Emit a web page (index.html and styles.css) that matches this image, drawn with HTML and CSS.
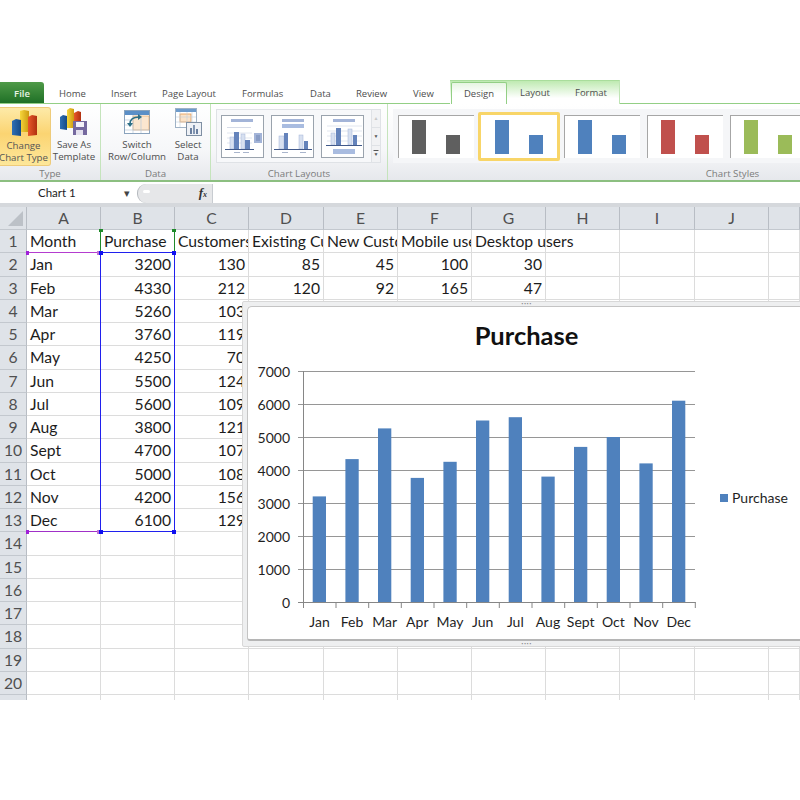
FILE: index.html
```html
<!DOCTYPE html>
<html>
<head>
<meta charset="utf-8">
<title>Purchase chart</title>
<link rel="stylesheet" href="styles.css">
</head>
<body>

<div class="tabs">
  <div class="tab file">File</div>
  <div class="tab t-home">Home</div>
  <div class="tab t-insert">Insert</div>
  <div class="tab t-page">Page Layout</div>
  <div class="tab t-formulas">Formulas</div>
  <div class="tab t-data">Data</div>
  <div class="tab t-review">Review</div>
  <div class="tab t-view">View</div>
  <div class="chart-tools">
    <div class="tab design">Design</div>
    <div class="tab t-layout">Layout</div>
    <div class="tab t-format">Format</div>
  </div>
</div>

<div class="ribbon">
  <div class="group g-type">
    <div class="group-body">
      <div class="big-btn active b-change">
        <svg width="32" height="30" viewBox="8 107 32 30">
          <defs>
            <linearGradient id="blue" x1="0" x2="1" y1="0" y2="0"><stop offset="0" stop-color="#2f6fb5"/><stop offset="1" stop-color="#164a86"/></linearGradient>
            <linearGradient id="yellow" x1="0" x2="1" y1="0" y2="0"><stop offset="0" stop-color="#f6d63c"/><stop offset="1" stop-color="#cc9a10"/></linearGradient>
            <linearGradient id="red" x1="0" x2="1" y1="0" y2="0"><stop offset="0" stop-color="#e8582a"/><stop offset="1" stop-color="#b0300f"/></linearGradient>
          </defs>
          <polygon points="20,110 24,109 29,110 29,131 20,131" fill="url(#yellow)"/>
          <polygon points="12,120 16,118 21,119 21,135 12,134" fill="url(#blue)"/>
          <polygon points="28,116 32,114 37,115 37,134 28,135" fill="url(#red)"/>
        </svg>
        <span>Change<br>Chart Type</span>
      </div>
      <div class="big-btn b-save">
        <svg width="32" height="30" viewBox="58 107 32 30">
          <polygon points="67,110 70,108 74,109 74,128 67,128" fill="url(#yellow)"/>
          <polygon points="60,117 63,115 67,116 67,130 60,129" fill="url(#blue)"/>
          <polygon points="74,113 78,111 81,112 81,122 74,126" fill="url(#red)"/>
          <rect x="73" y="121" width="14" height="14" fill="#75699f"/>
          <rect x="76" y="122" width="8" height="5" fill="#f4f2f8"/>
          <rect x="76" y="130" width="7" height="5" fill="#e4e1ee"/>
        </svg>
        <span>Save As<br>Template</span>
      </div>
    </div>
    <div class="group-label">Type</div>
  </div>

  <div class="group g-data">
    <div class="group-body">
      <div class="big-btn b-switch">
        <svg width="30" height="30" viewBox="122 107 30 30">
          <rect x="124.500" y="110.500" width="25" height="23" fill="#fff" stroke="#8aa3bd"/>
          <rect x="125" y="111" width="24" height="4" fill="#5b8fc7"/>
          <rect x="133" y="116" width="16" height="14" fill="#fbe6cf" stroke="#e7a868" stroke-width="0.700"/>
          <path d="M125 120H133M125 125H133M125 130H149M133 115V133M141 115V133" stroke="#b9c8d8" stroke-width="0.700" fill="none"/>
          <path d="M130 124C130 119 134 117 139 117" stroke="#2d6f86" stroke-width="1.500" fill="none"/>
          <path d="M138 114L142 117L138 120Z" fill="#2d6f86"/>
          <path d="M127 123L130 127L133 123Z" fill="#2d6f86"/>
        </svg>
        <span>Switch<br>Row/Column</span>
      </div>
      <div class="big-btn b-select">
        <svg width="30" height="30" viewBox="173 107 30 30">
          <rect x="175.500" y="108.500" width="21" height="19" fill="#fff" stroke="#9fb2c6"/>
          <rect x="176" y="109" width="20" height="3" fill="#6d9bcc"/>
          <rect x="180" y="114" width="11" height="8" fill="#fbe3c8" stroke="#e59a4f" stroke-width="0.800"/>
          <path d="M176 117H196M176 122H196M180 112V127M187 112V127M192 112V127" stroke="#c5d1dd" stroke-width="0.600" fill="none"/>
          <rect x="186.500" y="122.500" width="15" height="13" fill="#eef1f6" stroke="#7f8fa3"/>
          <rect x="190" y="128" width="2" height="6" fill="#6a7f9f"/>
          <rect x="193" y="125" width="2" height="9" fill="#8497b3"/>
          <rect x="196" y="129" width="2" height="5" fill="#6a7f9f"/>
        </svg>
        <span>Select<br>Data</span>
      </div>
    </div>
    <div class="group-label">Data</div>
  </div>

  <div class="group g-layouts">
    <div class="group-body">
      <div class="layout-gallery">
        <div class="layout-thumb">
          <svg width="41" height="41" viewBox="0 0 41 41">
            <rect x="9" y="3" width="22" height="3" fill="#a3b4d8"/>
            <rect x="5" y="11" width="24" height="1" fill="#d5dbe8"/>
            <path d="M5 17H30M5 22H30M5 27H30" stroke="#d9dfeb" stroke-width="0.800"/>
            <rect x="8" y="21" width="4" height="12" fill="#d7e0f0" stroke="#a3b4d8" stroke-width="0.500"/>
            <rect x="12" y="16" width="5" height="17" fill="#6483bb"/>
            <rect x="19" y="18" width="4" height="15" fill="#d7e0f0" stroke="#a3b4d8" stroke-width="0.500"/>
            <rect x="23" y="24" width="5" height="9" fill="#6483bb"/>
            <rect x="3" y="33" width="29" height="1" fill="#41598a"/>
            <rect x="32" y="17" width="8" height="10" fill="#a3b4d8"/>
            <path d="M34 20H38M34 22H38M34 24H38" stroke="#5f78aa" stroke-width="0.800"/>
            <rect x="12" y="36" width="6" height="1" fill="#a9b5cc"/>
            <rect x="21" y="36" width="6" height="1" fill="#a9b5cc"/>
          </svg>
        </div>
        <div class="layout-thumb">
          <svg width="41" height="41" viewBox="0 0 41 41">
            <rect x="10" y="3" width="22" height="3" fill="#a3b4d8"/>
            <rect x="10" y="8" width="22" height="4" fill="#a9bce0"/>
            <rect x="7" y="20" width="5" height="13" fill="#d7e0f0" stroke="#a3b4d8" stroke-width="0.500"/>
            <rect x="12" y="17" width="4" height="16" fill="#6483bb"/>
            <rect x="27" y="19" width="4" height="14" fill="#d7e0f0" stroke="#a3b4d8" stroke-width="0.500"/>
            <rect x="32" y="25" width="4" height="8" fill="#6483bb"/>
            <rect x="2" y="33" width="38" height="1" fill="#41598a"/>
            <rect x="10" y="36" width="6" height="1" fill="#a9b5cc"/>
            <rect x="28" y="36" width="6" height="1" fill="#a9b5cc"/>
          </svg>
        </div>
        <div class="layout-thumb">
          <svg width="41" height="41" viewBox="0 0 41 41">
            <rect x="11" y="3" width="22" height="3" fill="#a3b4d8"/>
            <path d="M5 10H40M5 15H40M5 20H40M5 25H40" stroke="#d9dfeb" stroke-width="0.800"/>
            <rect x="9" y="17" width="4" height="12" fill="#d7e0f0" stroke="#a3b4d8" stroke-width="0.500"/>
            <rect x="14" y="12" width="5" height="17" fill="#6483bb"/>
            <rect x="26" y="13" width="4" height="16" fill="#d7e0f0" stroke="#a3b4d8" stroke-width="0.500"/>
            <rect x="31" y="19" width="4" height="10" fill="#6483bb"/>
            <rect x="4" y="29" width="36" height="1" fill="#41598a"/>
            <rect x="11" y="33" width="22" height="5" fill="#a9bce0"/>
          </svg>
        </div>
        <div class="gallery-scroll">
          <div class="scroll-btn off">▲</div>
          <div class="scroll-btn">▼</div>
          <div class="scroll-btn more">▼</div>
        </div>
      </div>
    </div>
    <div class="group-label">Chart Layouts</div>
  </div>

  <div class="group g-styles">
    <div class="group-body">
      <div class="style-gallery">
        <div class="style-thumb"><i class="bar tall dark"></i><i class="bar short dark"></i></div>
        <div class="style-thumb selected"><i class="bar tall blue"></i><i class="bar short blue"></i></div>
        <div class="style-thumb"><i class="bar tall blue"></i><i class="bar short blue"></i></div>
        <div class="style-thumb"><i class="bar tall red"></i><i class="bar short red"></i></div>
        <div class="style-thumb"><i class="bar tall green"></i><i class="bar short green"></i></div>
      </div>
    </div>
    <div class="group-label">Chart Styles</div>
  </div>
</div>

<div class="formula-bar">
  <div class="name-box">Chart 1<span class="arrow">▾</span></div>
  <div class="fx-part"><span class="knob"></span><span class="fx">f<sub>x</sub></span></div>
  <div class="formula-input"></div>
</div>

<div class="sheet">
  <table class="cells">
    <colgroup>
      <col class="c-head"><col class="c74"><col class="c74"><col class="c74"><col class="c75"><col class="c74"><col class="c74"><col class="c74"><col class="c74"><col class="c75"><col class="c74"><col class="c-rest">
    </colgroup>
    <tr class="head-row"><th class="corner"><i></i></th><th>A</th><th>B</th><th>C</th><th>D</th><th>E</th><th>F</th><th>G</th><th>H</th><th>I</th><th>J</th><th></th></tr>
    <tr><th>1</th><td>Month</td><td>Purchase</td><td>Customers</td><td>Existing Customers</td><td>New Customers</td><td>Mobile users</td><td class="spill">Desktop users</td><td></td><td></td><td></td><td></td></tr>
    <tr><th>2</th><td>Jan</td><td class="n">3200</td><td class="n">130</td><td class="n">85</td><td class="n">45</td><td class="n">100</td><td class="n">30</td><td></td><td></td><td></td><td></td></tr>
    <tr><th>3</th><td>Feb</td><td class="n">4330</td><td class="n">212</td><td class="n">120</td><td class="n">92</td><td class="n">165</td><td class="n">47</td><td></td><td></td><td></td><td></td></tr>
    <tr><th>4</th><td>Mar</td><td class="n">5260</td><td class="n">103</td><td class="n">67</td><td class="n">36</td><td class="n">80</td><td class="n">23</td><td></td><td></td><td></td><td></td></tr>
    <tr><th>5</th><td>Apr</td><td class="n">3760</td><td class="n">119</td><td></td><td></td><td></td><td></td><td></td><td></td><td></td><td></td></tr>
    <tr><th>6</th><td>May</td><td class="n">4250</td><td class="n">70</td><td></td><td></td><td></td><td></td><td></td><td></td><td></td><td></td></tr>
    <tr><th>7</th><td>Jun</td><td class="n">5500</td><td class="n">124</td><td></td><td></td><td></td><td></td><td></td><td></td><td></td><td></td></tr>
    <tr><th>8</th><td>Jul</td><td class="n">5600</td><td class="n">109</td><td></td><td></td><td></td><td></td><td></td><td></td><td></td><td></td></tr>
    <tr><th>9</th><td>Aug</td><td class="n">3800</td><td class="n">121</td><td></td><td></td><td></td><td></td><td></td><td></td><td></td><td></td></tr>
    <tr><th>10</th><td>Sept</td><td class="n">4700</td><td class="n">107</td><td></td><td></td><td></td><td></td><td></td><td></td><td></td><td></td></tr>
    <tr><th>11</th><td>Oct</td><td class="n">5000</td><td class="n">108</td><td></td><td></td><td></td><td></td><td></td><td></td><td></td><td></td></tr>
    <tr><th>12</th><td>Nov</td><td class="n">4200</td><td class="n">156</td><td></td><td></td><td></td><td></td><td></td><td></td><td></td><td></td></tr>
    <tr><th>13</th><td>Dec</td><td class="n">6100</td><td class="n">129</td><td></td><td></td><td></td><td></td><td></td><td></td><td></td><td></td></tr>
    <tr><th>14</th><td></td><td></td><td></td><td></td><td></td><td></td><td></td><td></td><td></td><td></td><td></td></tr>
    <tr><th>15</th><td></td><td></td><td></td><td></td><td></td><td></td><td></td><td></td><td></td><td></td><td></td></tr>
    <tr><th>16</th><td></td><td></td><td></td><td></td><td></td><td></td><td></td><td></td><td></td><td></td><td></td></tr>
    <tr><th>17</th><td></td><td></td><td></td><td></td><td></td><td></td><td></td><td></td><td></td><td></td><td></td></tr>
    <tr><th>18</th><td></td><td></td><td></td><td></td><td></td><td></td><td></td><td></td><td></td><td></td><td></td></tr>
    <tr><th>19</th><td></td><td></td><td></td><td></td><td></td><td></td><td></td><td></td><td></td><td></td><td></td></tr>
    <tr><th>20</th><td></td><td></td><td></td><td></td><td></td><td></td><td></td><td></td><td></td><td></td><td></td></tr>
    <tr><th></th><td></td><td></td><td></td><td></td><td></td><td></td><td></td><td></td><td></td><td></td><td></td></tr>
  </table>

  <!-- range markers for the selected series -->
  <div class="range r-green"></div>
  <div class="range r-purple"></div>
  <div class="range r-purple2"></div>
  <div class="range r-blue"></div>
  <i class="grip g1"></i><i class="grip g2"></i>
  <i class="grip p1"></i><i class="grip p2"></i><i class="grip p3"></i><i class="grip p4"></i>
  <i class="grip b1"></i><i class="grip b2"></i><i class="grip b3"></i><i class="grip b4"></i>

  <div class="chart">
    <span class="dots top">····</span>
    <span class="dots bottom">····</span>
    <div class="chart-inner">
      <svg class="plot" width="552" height="334" viewBox="248 307 552 334">
        <text class="title" x="526.500" y="345" text-anchor="middle">Purchase</text>

        <g class="grid">
          <path d="M298 371.500H695M298 404.500H695M298 437.500H695M298 470.500H695M298 503.500H695M298 536.500H695M298 569.500H695"/>
        </g>

        <g fill="#4f81bd">
          <rect x="312.700" y="496.400" width="13.300" height="105.600"/>
          <rect x="345.400" y="459.100" width="13.300" height="142.900"/>
          <rect x="378" y="428.400" width="13.300" height="173.600"/>
          <rect x="410.700" y="477.900" width="13.300" height="124.100"/>
          <rect x="443.400" y="461.800" width="13.300" height="140.200"/>
          <rect x="476" y="420.500" width="13.300" height="181.500"/>
          <rect x="508.700" y="417.200" width="13.300" height="184.800"/>
          <rect x="541.400" y="476.600" width="13.300" height="125.400"/>
          <rect x="574" y="446.900" width="13.300" height="155.100"/>
          <rect x="606.700" y="437" width="13.300" height="165"/>
          <rect x="639.400" y="463.400" width="13.300" height="138.600"/>
          <rect x="672" y="400.700" width="13.300" height="201.300"/>
        </g>

        <g class="axis">
          <path d="M303.500 371V602.500M298 602.500H695.500"/>
          <path d="M303.500 602V608M336 602V608M368.700 602V608M401.300 602V608M434 602V608M466.700 602V608M499.300 602V608M532 602V608M564.700 602V608M597.300 602V608M630 602V608M662.700 602V608M695.300 602V608"/>
        </g>

        <g class="labels" text-anchor="end">
          <text x="290" y="377">7000</text>
          <text x="290" y="410">6000</text>
          <text x="290" y="443">5000</text>
          <text x="290" y="476">4000</text>
          <text x="290" y="509">3000</text>
          <text x="290" y="542">2000</text>
          <text x="290" y="575">1000</text>
          <text x="290" y="608">0</text>
        </g>

        <g class="labels" text-anchor="middle">
          <text x="319.500" y="627">Jan</text>
          <text x="352" y="627">Feb</text>
          <text x="384.700" y="627">Mar</text>
          <text x="417.300" y="627">Apr</text>
          <text x="450" y="627">May</text>
          <text x="482.700" y="627">Jun</text>
          <text x="515.300" y="627">Jul</text>
          <text x="548" y="627">Aug</text>
          <text x="580.700" y="627">Sept</text>
          <text x="613.300" y="627">Oct</text>
          <text x="646" y="627">Nov</text>
          <text x="678.700" y="627">Dec</text>
        </g>

        <rect x="720" y="494" width="8" height="8" fill="#4f81bd"/>
        <text class="labels" x="732" y="503">Purchase</text>
      </svg>
    </div>
  </div>
</div>

</body>
</html>
```

FILE: styles.css
```css
html, body {
  margin: 0;
  height: 800px;
  overflow: hidden;
  background: #fff;
}

body {
  padding-top: 82px;
  box-sizing: border-box;
  font-family: "Open Sans", "Liberation Sans", sans-serif;
  font-size: 9.700px;
  color: #444;
}

/* Tabs */
.tabs {
  display: flex;
  height: 21px;
  border-bottom: 1px solid #93cf85;
}

.tab {
  line-height: 24px;
  font-size: 9.500px;
  color: #4d4d4d;
  white-space: nowrap;
}

.file {
  width: 44px;
  height: 21px;
  margin-right: 15px;
  text-align: center;
  font-weight: 600;
  color: #e8f3e5;
  border-radius: 0 3px 0 0;
  background: linear-gradient(#4f9a48, #1f7026);
}

.t-home { width: 52px; }
.t-insert { width: 51px; }
.t-page { width: 80px; }
.t-formulas { width: 68px; }
.t-data { width: 46px; }
.t-review { width: 57px; }
.t-view { width: 37px; }

.chart-tools {
  display: flex;
  flex: none;
  width: 170px;
  height: 24px;
  margin-top: -2px;
  border-right: 1px solid #bfe5b5;
  background: linear-gradient(#bfeab2, #fff 75%);
  box-sizing: border-box;
  border-top: 1px solid #a9dd9c;
}

.design {
  width: 56px;
  height: 23px;
  margin-left: 1px;
  margin-top: 1px;
  line-height: 22px;
  text-align: center;
  box-sizing: border-box;
  border: 1px solid #93cf85;
  border-bottom: 1px solid #fff;
  border-radius: 2px 2px 0 0;
  background: linear-gradient(#e6f5e1, #fff 50%);
}

.t-layout { width: 55px; margin: 1px 0 0 13px; line-height: 22px; }
.t-format { margin-top: 1px; line-height: 22px; }

/* Ribbon */
.ribbon {
  display: flex;
  width: 800px;
  height: 76px;
  overflow: hidden;
  border-bottom: 2px solid #8cbf80;
}

.group {
  display: flex;
  flex: none;
  flex-direction: column;
  box-sizing: border-box;
  border-right: 1px solid #c5e4bc;
  background: linear-gradient(#fff, #f6f7f9 60%, #e6e8ec);
}

.g-type { width: 101px; }
.g-data { width: 110px; }
.g-layouts { width: 177px; }
.g-styles { width: 690px; }

.group-body {
  display: flex;
  height: 63px;
}

.group-label {
  height: 13px;
  line-height: 13px;
  text-align: center;
  color: #7b7b7b;
}

.big-btn {
  display: flex;
  flex-direction: column;
  align-items: center;
  box-sizing: border-box;
  height: 59px;
  margin-top: 3px;
  line-height: 12px;
  text-align: center;
  color: #4d4d4d;
  white-space: nowrap;
}

.big-btn svg {
  display: block;
  margin-bottom: 2px;
}

.big-btn.active {
  color: #555;
  padding-right: 3px;
  border: 1px solid #eecb7a;
  border-left: none;
  border-radius: 0 3px 3px 0;
  background: linear-gradient(#fdeaa8, #fbd472 45%, #fde79a);
}

.b-change { width: 51px; }
.b-save { width: 44px; margin-left: 1px; }
.b-switch { width: 62px; margin-left: 5px; }
.b-select { width: 34px; margin-left: 3px; }

/* Chart layout gallery */
.layout-gallery {
  display: flex;
  gap: 7px;
  box-sizing: border-box;
  width: 165px;
  height: 54px;
  margin: 5px 0 0 5px;
  padding-left: 4px;
  align-items: center;
  border: 1px solid #dfe2e6;
  background: #f7f8fa;
}

.layout-thumb {
  width: 41px;
  height: 41px;
  border: 1px solid #9aa3ad;
  background: #fff;
}

.layout-thumb svg {
  display: block;
}

.gallery-scroll {
  display: flex;
  flex-direction: column;
  width: 12px;
  height: 52px;
  margin-left: auto;
  background: #f1f2f4;
}

.scroll-btn {
  flex: 1;
  font-size: 5px;
  line-height: 17px;
  text-align: center;
  color: #555;
  border-left: 1px solid #dfe2e6;
  border-bottom: 1px solid #dfe2e6;
}

.scroll-btn.off {
  color: #c8c8c8;
}

.scroll-btn.more {
  border-bottom: none;
  text-decoration: overline;
}

/* Chart styles gallery */
.style-gallery {
  display: flex;
  gap: 7px;
  align-items: center;
  height: 54px;
  margin: 5px 0 0 5px;
  padding-left: 5px;
  background: #f5f6f8;
}

.style-thumb {
  display: flex;
  flex: none;
  gap: 20px;
  align-items: flex-end;
  box-sizing: border-box;
  width: 76px;
  height: 43px;
  padding: 0 0 4px 13px;
  border-top: 1px solid #a6a6a6;
  border-left: 1px solid #a6a6a6;
  background: #fff;
}

.style-thumb.selected {
  width: 82px;
  height: 49px;
  margin: 0 -3px;
  padding: 0 0 4px 14px;
  border: 3px solid #f8d568;
  border-radius: 2px;
}

.bar { display: block; width: 14px; }
.bar.tall { height: 34px; }
.bar.short { height: 19px; }
.bar.dark { background: #5f5f5f; }
.bar.blue { background: #4f81bd; }
.bar.red { background: #c0504d; }
.bar.green { background: #9bbb59; }

/* Formula bar */
.formula-bar {
  display: flex;
  height: 19px;
  margin-top: 2px;
  background: #fff;
}

.name-box {
  position: relative;
  width: 137px;
  padding-left: 38px;
  box-sizing: border-box;
  font-family: Lato, "Liberation Sans", sans-serif;
  font-size: 11.500px;
  line-height: 18px;
  color: #222;
}

.arrow {
  position: absolute;
  left: 124px;
  top: 0;
  font-size: 11px;
  color: #444;
}

.fx-part {
  display: flex;
  justify-content: flex-end;
  width: 75px;
  box-sizing: border-box;
  padding-right: 5px;
  border-radius: 9px 0 0 9px;
  border-left: 1px solid #b5b9be;
  background: #e6e7e9;
}

.knob {
  width: 7px;
  height: 3px;
  margin: 6px auto 0 5px;
  border-radius: 3px;
  background: #fff;
}

.fx {
  font-family: "Liberation Serif", serif;
  font-style: italic;
  font-weight: bold;
  font-size: 13px;
  line-height: 18px;
  color: #333;
}

.fx sub {
  font-size: 8px;
  vertical-align: baseline;
}

.formula-input {
  flex: 1;
  border-left: 1px solid #c8ccd1;
}

/* Sheet */
.sheet {
  position: relative;
  height: 493px;
  overflow: hidden;
  border-top: 4px solid #d5d8dc;
}

.cells {
  table-layout: fixed;
  width: 800px;
  border-collapse: separate;
  border-spacing: 0;
  font-family: Lato, "Liberation Sans", sans-serif;
  font-size: 15.700px;
  color: #1c1c1c;
}

.c-head { width: 27px; }
.c74 { width: 74px; }
.c75 { width: 75px; }
.c-rest { width: 31px; }

.cells tr { height: 23.250px; }
.cells .head-row { height: 23px; }

.cells th {
  padding: 0;
  font-weight: normal;
  color: #505050;
  background: #dfe3e8;
  border-right: 1px solid #b8bdc4;
  border-bottom: 1px solid #c3c8ce;
}

.cells td {
  padding: 0 3px;
  overflow: hidden;
  white-space: nowrap;
  border-right: 1px solid #dcdcdc;
  border-bottom: 1px solid #dcdcdc;
}

.cells td.n { text-align: right; }
.cells td.spill { overflow: visible; }

.corner {
  position: relative;
}

.corner i {
  position: absolute;
  right: 3px;
  bottom: 3px;
  border-style: solid;
  border-width: 0 0 15px 15px;
  border-color: transparent transparent #bcc1c7 transparent;
}

/* Range markers */
.range {
  position: absolute;
  box-sizing: border-box;
}

.r-green {
  left: 100px;
  top: 22px;
  width: 75px;
  height: 24px;
  border-left: 1px solid #1f8a2a;
  border-right: 1px solid #1f8a2a;
}

.r-purple {
  left: 27px;
  top: 45px;
  width: 74px;
  height: 1px;
  background: #b43ccf;
}

.r-purple2 {
  left: 27px;
  top: 324px;
  width: 74px;
  height: 1px;
  background: #a030c8;
}

.r-blue {
  left: 100px;
  top: 45px;
  width: 75px;
  height: 280px;
  border: 1px solid #2020ee;
}

.grip {
  position: absolute;
  width: 4px;
  height: 4px;
}

.g1, .g2 { top: 22px; height: 3px; background: #1f8a2a; }
.g1 { left: 99px; }
.g2 { left: 172px; }
.p1, .p2, .p3, .p4 { background: #a020d8; }
.p1 { left: 26px; top: 44px; width: 3px; }
.p2 { left: 97px; top: 44px; background: #c070d8; }
.p3 { left: 26px; top: 323px; width: 3px; }
.p4 { left: 97px; top: 323px; background: #c070d8; }
.b1, .b2, .b3, .b4 { background: #1010f0; }
.b1 { left: 99px; top: 44px; }
.b2 { left: 172px; top: 44px; }
.b3 { left: 99px; top: 323px; }
.b4 { left: 172px; top: 323px; }

/* Embedded chart */
.chart {
  position: absolute;
  left: 242px;
  top: 94px;
  width: 580px;
  height: 346px;
  box-sizing: border-box;
  padding: 4px 0 5px 4px;
  border: 1px solid #d8d8d8;
  border-radius: 2px;
  background: #eeeff0;
}

.dots {
  position: absolute;
  left: 278px;
  font-size: 10px;
  line-height: 5px;
  color: #8a8a8a;
}

.dots.top { top: -1px; }
.dots.bottom { bottom: 0; }

.chart-inner {
  height: 100%;
  border-top: 1px solid #c4c4c4;
  border-left: 1px solid #c4c4c4;
  border-bottom: 2px solid #b5b5b5;
  border-radius: 5px 0 0 3px;
  background: #fff;
  box-sizing: border-box;
  overflow: hidden;
}

.plot {
  display: block;
  font-family: Lato, "Liberation Sans", sans-serif;
}

.title {
  font-size: 25.500px;
  font-weight: bold;
  fill: #111;
}

.grid path {
  stroke: #969696;
  fill: none;
}

.axis path {
  stroke: #868686;
  fill: none;
}

.labels {
  font-size: 14px;
  fill: #1f1f1f;
}
```
